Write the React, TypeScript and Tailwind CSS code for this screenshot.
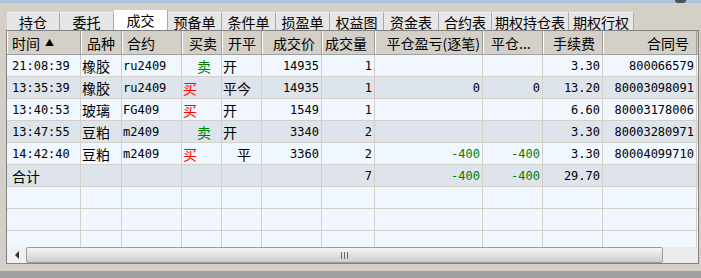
import React from "react";

const CJK = "font-['Noto_Sans_CJK_SC',sans-serif] text-[14px]";
const MONO = "font-['DejaVu_Sans_Mono',monospace] text-[12px]";

const widths = [
  "w-[74px]",
  "w-[41px]",
  "w-[60px]",
  "w-[40px]",
  "w-[40px]",
  "w-[60px]",
  "w-[53px]",
  "w-[108px]",
  "w-[60px]",
  "w-[60px]",
  "w-[94px]",
];

const tabs: { label: string; w: string; active?: boolean }[] = [
  { label: "持仓", w: "w-[53px]" },
  { label: "委托", w: "w-[54px]" },
  { label: "成交", w: "w-[54px]", active: true },
  { label: "预备单", w: "w-[54px]" },
  { label: "条件单", w: "w-[54px]" },
  { label: "损盈单", w: "w-[54px]" },
  { label: "权益图", w: "w-[54px]" },
  { label: "资金表", w: "w-[55px]" },
  { label: "合约表", w: "w-[53px]" },
  { label: "期权持仓表", w: "w-[77px]" },
  { label: "期权行权", w: "w-[65px]" },
];

const headers: { label: React.ReactNode; cls: string }[] = [
  {
    label: (
      <>
        时间<span className="text-[9px] ml-[5px]">▲</span>
      </>
    ),
    cls: "justify-start pl-[5px]",
  },
  { label: "品种", cls: "justify-start pl-[6px]" },
  { label: "合约", cls: "justify-start pl-[5px]" },
  { label: "买卖", cls: "justify-start pl-[7px]" },
  { label: "开平", cls: "justify-start pl-[6px]" },
  { label: "成交价", cls: "justify-end pr-[6px]" },
  { label: "成交量", cls: "justify-end pr-[7px]" },
  { label: "平仓盈亏(逐笔)", cls: "justify-end pr-[2px]" },
  { label: "平仓...", cls: "justify-start pl-[8px]" },
  { label: "手续费", cls: "justify-end pr-[7px]" },
  { label: "合同号", cls: "justify-end pr-[7px]" },
];

const rows: string[][] = [
  ["21:08:39", "橡胶", "ru2409", "卖", "开", "14935", "1", "", "", "3.30", "800066579"],
  ["13:35:39", "橡胶", "ru2409", "买", "平今", "14935", "1", "0", "0", "13.20", "80003098091"],
  ["13:40:53", "玻璃", "FG409", "买", "开", "1549", "1", "", "", "6.60", "80003178006"],
  ["13:47:55", "豆粕", "m2409", "卖", "开", "3340", "2", "", "", "3.30", "80003280971"],
  ["14:42:40", "豆粕", "m2409", "买", "平", "3360", "2", "-400", "-400", "3.30", "80004099710"],
  ["合计", "", "", "", "", "", "7", "-400", "-400", "29.70", ""],
];

function cellClass(ci: number, v: string, total: boolean): string {
  if (ci === 0) return total ? `${CJK} pl-[5px]` : `${MONO} pl-[5px]`;
  if (ci === 1) return `${CJK} pl-[1px]`;
  if (ci === 2) return `${MONO} pl-[1px]`;
  if (ci === 3)
    return v === "买"
      ? `${CJK} pl-[1px] text-[#ff0000]`
      : `${CJK} pl-[15px] text-[#008000]`;
  if (ci === 4) return v === "平" ? `${CJK} pl-[15px]` : `${CJK} pl-[1px]`;
  return v.startsWith("-")
    ? `${MONO} justify-end pr-[2px] text-[#008000]`
    : `${MONO} justify-end pr-[2px]`;
}

export default function App() {
  return (
    <div className="w-[701px] h-[278px] bg-[#d4d0c8] flex flex-col overflow-hidden text-black">
      <div className="h-[3px] bg-[#abc3db] flex justify-end">
        <div className="w-[11px] h-[3px] bg-[#505050] rounded-b-full mr-[15px]" />
      </div>
      <div className="h-[7px]" />
      {/* tabs */}
      <div className="h-[20px] flex items-end pl-[7px]">
        {tabs.map((t) =>
          t.active ? (
            <div
              key={t.label}
              className={`${t.w} h-[20px] bg-white flex items-center justify-center ${CJK} leading-none border-r border-[#a8a8a8]`}
            >
              {t.label}
            </div>
          ) : (
            <div
              key={t.label}
              className={`${t.w} h-[18px] bg-[#e6e6e6] flex items-center justify-center ${CJK} leading-none border-r border-[#a8a8a8] border-t border-t-[#f4f4f4]`}
            >
              {t.label}
            </div>
          )
        )}
      </div>
      {/* frame */}
      <div className="ml-[6px] w-[693px] h-[234px] border border-[#828282] bg-[#f0f7ff] flex flex-col">
        {/* header */}
        <div className="flex h-[24px] bg-[#d4d0c8] border-b border-[#a0a0a0] shrink-0">
          {headers.map((h, i) => (
            <div
              key={i}
              className={`${widths[i]} h-full flex items-center ${h.cls} ${CJK} leading-none whitespace-nowrap overflow-hidden border-r border-[#9c9c9c] shadow-[inset_1px_0_0_#ffffff]`}
            >
              {h.label}
            </div>
          ))}
        </div>
        {/* body */}
        <div className="h-[192px] overflow-hidden shrink-0">
          {rows.map((r, ri) => (
            <div
              key={ri}
              className={`flex h-[22px] border-b border-[#d4d0c8] ${
                ri % 2 === 0 ? "bg-[#f0f7ff]" : "bg-[#dde4ec]"
              }`}
            >
              {r.map((v, ci) => (
                <div
                  key={ci}
                  className={`${widths[ci]} h-full flex items-center leading-none whitespace-nowrap overflow-hidden border-r border-[#d4d0c8] ${cellClass(
                    ci,
                    v,
                    ri === 5
                  )}`}
                >
                  {v}
                </div>
              ))}
            </div>
          ))}
          {[0, 1, 2].map((k) => (
            <div key={`e${k}`} className="flex h-[22px] border-b border-[#d4d0c8] bg-[#f0f7ff]">
              {widths.map((w, ci) => (
                <div key={ci} className={`${w} h-full border-r border-[#d4d0c8]`} />
              ))}
            </div>
          ))}
        </div>
        {/* scrollbar */}
        <div className="h-[16px] flex bg-[#ececec] shrink-0">
          <div className="w-[19px] h-full flex items-center justify-center bg-[#f0f0f0]">
            <div className="w-0 h-0 border-y-[4px] border-y-transparent border-r-[4px] border-r-[#303030]" />
          </div>
          <div className="w-[637px] h-full border border-[#9a9a9a] rounded-[2px] bg-gradient-to-b from-[#f6f6f6] to-[#cdcdcd] flex items-center justify-center">
            <div className="flex gap-[2px]">
              <div className="w-[1px] h-[7px] bg-[#6a6a6a]" />
              <div className="w-[1px] h-[7px] bg-[#6a6a6a]" />
              <div className="w-[1px] h-[7px] bg-[#6a6a6a]" />
            </div>
          </div>
        </div>
      </div>
      <div className="h-[7px]" />
      <div className="flex-1 bg-[#a0a0a0]" />
    </div>
  );
}
